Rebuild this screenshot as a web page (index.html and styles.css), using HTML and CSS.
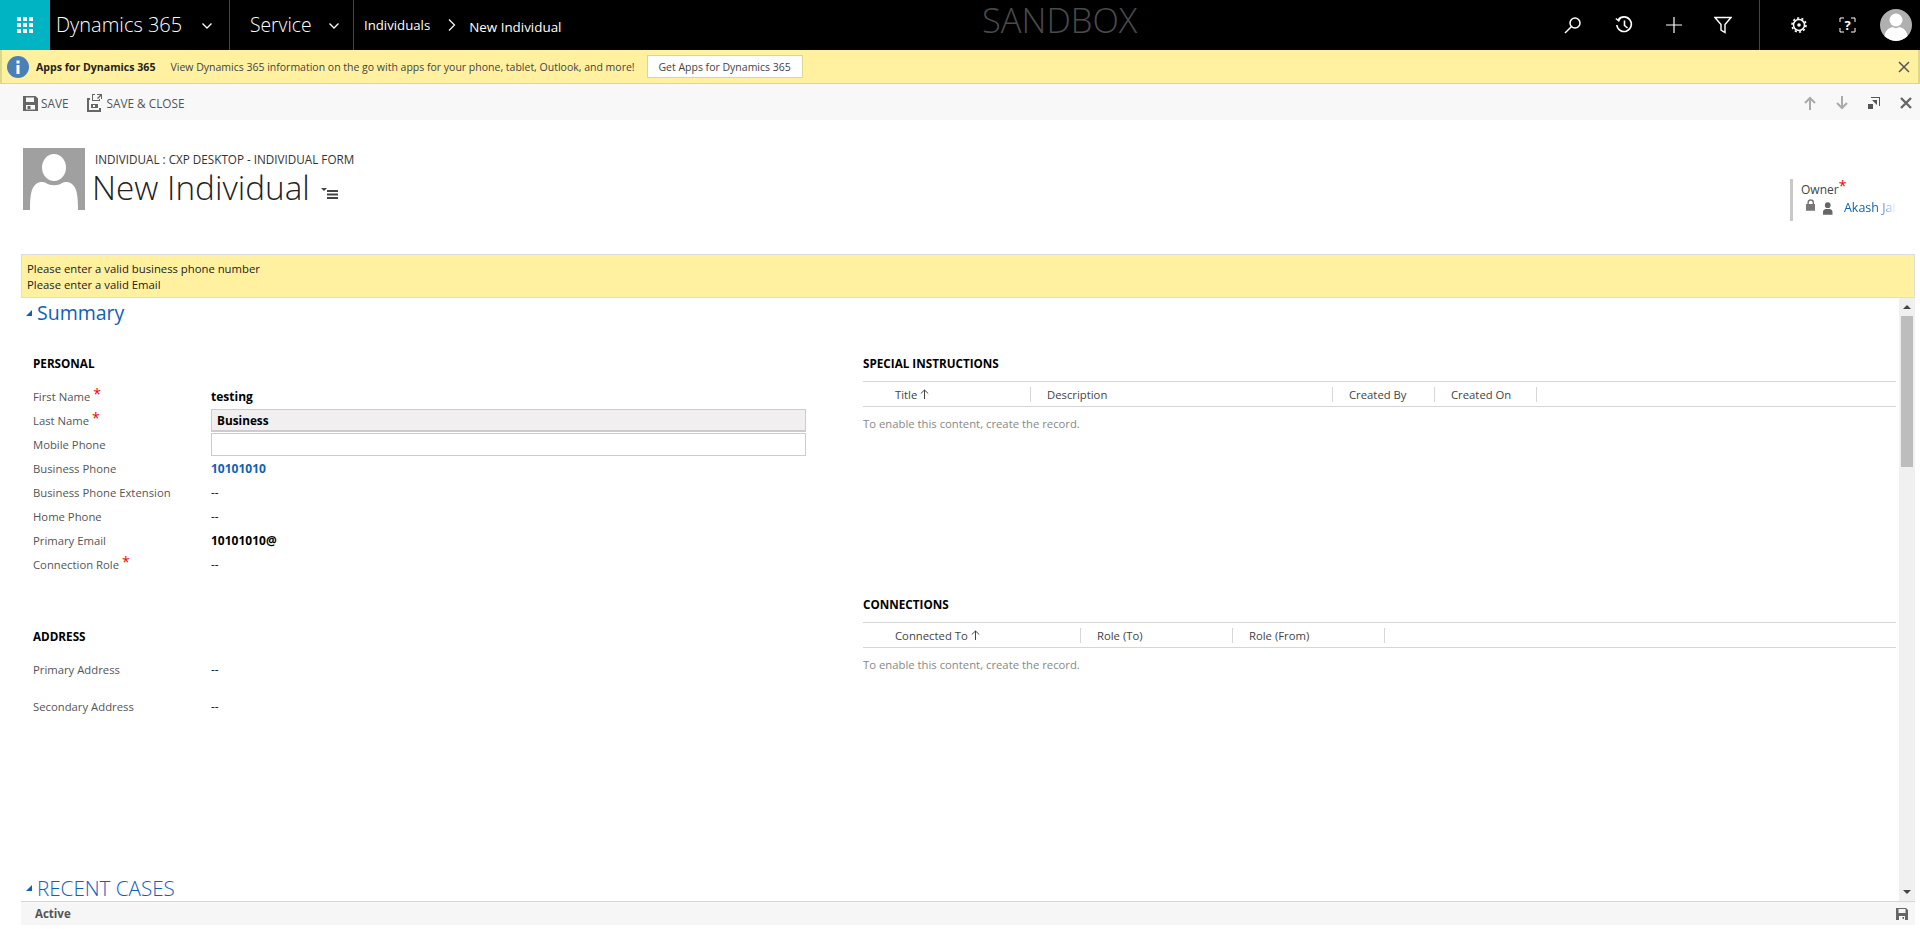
FILE: index.html
```html
<!doctype html>
<html lang=en>
<head>
	<title>New Individual</title>
	<link rel="stylesheet" href="styles.css">
</head>

<body>
	<header id=nav>
		<div class=tile>
			<svg width=16 height=16 viewBox="0 0 16 16" fill=#fff>
				<path d="M0 0h4v4H0zM6 0h4v4H6zM12 0h4v4h-4zM0 6h4v4H0zM6 6h4v4H6zM12 6h4v4h-4zM0 12h4v4H0zM6 12h4v4H6zM12 12h4v4h-4z"/>
			</svg>
		</div>
		<div class="area product">
			<span>Dynamics 365</span>
			<svg class=chev width=10 height=6 viewBox="0 0 10 6"><path d="M.5.5 5 5 9.500.5" fill=none stroke=#fff stroke-width=1.300 /></svg>
		</div>
		<div class="area service">
			<span>Service</span>
			<svg class=chev width=10 height=6 viewBox="0 0 10 6"><path d="M.5.5 5 5 9.500.5" fill=none stroke=#fff stroke-width=1.300 /></svg>
		</div>
		<div class=crumbs>
			<span class=crumb>Individuals</span>
			<svg width=8 height=12 viewBox="0 0 8 12"><path d="M1 .5 6.500 6 1 11.500" fill=none stroke=#fff stroke-width=1.200 /></svg>
			<span class="crumb current">New Individual</span>
		</div>
		<div class=sandbox>SANDBOX</div>
		<div class=tools>
			<svg width=18 height=18 viewBox="0 0 18 18" fill=none stroke=#fff stroke-width=1.500><circle cx=11 cy=7 r=5 /><path d="M7.300 10.700 1 17"/></svg>
			<svg width=18 height=18 viewBox="0 0 18 18" fill=none stroke=#fff stroke-width=1.600><path d="M3.200 3.800A7.300 7.300 0 1 1 1.800 9"/><path d="M.8 2.500 3.800 5 5.500 1.800" stroke-width=1.300 /><path d="M9.500 4.500V9.500L12.500 12"/></svg>
			<svg width=16 height=16 viewBox="0 0 16 16" stroke=#fff stroke-width=1.200><path d="M8 0v16M0 8h16"/></svg>
			<svg width=18 height=18 viewBox="0 0 18 18" fill=none stroke=#fff stroke-width=1.400><path d="M1 1.500h16L11 8.500v8L7 14V8.500z"/></svg>
			<div class=tools-sep></div>
			<svg class=gear width=16 height=16 viewBox="0 0 16 16" fill=none stroke=#fff><circle cx=8 cy=8 r=5.500 stroke-width=1.500 /><circle cx=8 cy=8 r=7 stroke-width=1.600 stroke-dasharray="2.200 2.200" /><circle cx=8 cy=8 r=1.800 fill=#fff stroke=none /></svg>
			<div class=help>
				<svg width=17 height=16 viewBox="0 0 17 16" fill=none stroke=#fff><path d="M1 5V1h4M12 1h4v4M16 11v4h-4M5 15H1v-4"/></svg>
				<span>?</span>
			</div>
			<svg class=avatar width=32 height=32 viewBox="0 0 32 32">
				<circle cx=16 cy=16 r=16 fill=#b0b0b0 />
				<circle cx=16 cy=11 r=6.500 fill=#fff />
				<path d="M4.500 27c1-7 6-8.500 8-9 2 1.500 5 1.500 7 0 2 .5 7 2 8 9a16 16 0 0 1-23 0z" fill=#fff />
			</svg>
		</div>
	</header>

	<div id=notify>
		<svg width=22 height=22 viewBox="0 0 22 22"><circle cx=11 cy=11 r=11 fill=#4a80b8 /><rect x=9.500 y=9 width=3 height=9 fill=#fff /><rect x=9.500 y=4.500 width=3 height=3 fill=#fff /></svg>
		<b>Apps for Dynamics 365</b>
		<span>View Dynamics 365 information on the go with apps for your phone, tablet, Outlook, and more!</span>
		<button>Get Apps for Dynamics 365</button>
		<svg class=notify-close width=12 height=12 viewBox="0 0 12 12"><path d="M1 1l10 10M11 1 1 11" stroke=#555 stroke-width=1.500 /></svg>
	</div>

	<div id=commands>
		<div class=command>
			<svg width=15 height=16 viewBox="0 0 15 16" fill=#666><path fill-rule=evenodd d="M0 1h12.500L15 3.500V16H0zM3 2.500V7h8V2.500zM3 10v4.500h9V10zM4.500 11h3v3h-3z"/></svg>
			SAVE
		</div>
		<div class=command>
			<svg width=17 height=19 viewBox="0 0 17 19" fill=#666><path fill-rule=evenodd d="M0 5h3v2H2v10h10v-2h2v4H0zM4 11h7v4H4zM6 12v2h2v-2z"/><path d="M5 1h3v1H6v5h6V6h1v2H5zM10 1h5v5h-1V3L11 6 10 5l3-3h-3z"/></svg>
			SAVE &amp; CLOSE
		</div>
		<div class=nav-icons>
			<svg width=12 height=14 viewBox="0 0 12 14" fill=none stroke=#aaa stroke-width=2><path d="M6 14V2M1 7l5-5 5 5"/></svg>
			<svg width=12 height=14 viewBox="0 0 12 14" fill=none stroke=#aaa stroke-width=2><path d="M6 0v12M1 7l5 5 5-5"/></svg>
			<svg width=12 height=12 viewBox="0 0 12 12"><path d="M3 0h9v9h-1V1H3z" fill=#555 /><path d="M0 7h5v5H0zM4 3h5v5z" fill=#555 /></svg>
			<svg width=12 height=12 viewBox="0 0 12 12"><path d="M1 1l10 10M11 1 1 11" stroke=#666 stroke-width=2.400 /></svg>
		</div>
	</div>

	<div id=form-head>
		<svg class=photo width=62 height=62 viewBox="0 0 62 62">
			<rect width=62 height=62 fill=#a0a0a0 />
			<ellipse cx=31 cy=19.500 rx=12 ry=13.500 fill=#fff />
			<path d="M7 62c0-14 1-22 6-26 4-3 8-2 10-1 4 3 12 3 16 0 2-1 6-2 10 1 5 4 6 12 6 26z" fill=#fff />
		</svg>
		<div class=titles>
			<div class=form-name>INDIVIDUAL : CXP DESKTOP - INDIVIDUAL FORM</div>
			<div class=record>
				<h1>New Individual</h1>
				<svg width=17 height=11 viewBox="0 0 17 11" fill=#444><path d="M0 0h6L3 3zM6 2h11v2H6zM6 5.500h11v2H6zM6 9h11v2H6z"/></svg>
			</div>
		</div>
		<div class=owner>
			<div class=owner-label>Owner<i class=req>*</i></div>
			<div class=owner-value>
				<svg width=10 height=12 viewBox="0 0 10 12" fill=#777><path fill-rule=evenodd d="M0 5h1.500V3.500a3.500 3.500 0 0 1 7 0V5H10v7H0zM3 5h4V3.500a2 2 0 0 0-4 0z"/></svg>
				<svg class=owner-user width=10 height=13 viewBox="0 0 10 13" fill=#666><circle cx=5 cy=3 r=3 /><path d="M0 13v-3c0-2 2-3 3-3h4c1 0 3 1 3 3v3z"/></svg>
				<span>Akash Jain</span>
			</div>
		</div>
	</div>

	<div id=warnings>
		<div>Please enter a valid business phone number</div>
		<div>Please enter a valid Email</div>
	</div>

	<main id=content>
		<div class=scroller>
			<h2 class=section><i class=tri></i>Summary</h2>
			<div class=columns>
				<section class=left>
					<h3>PERSONAL</h3>
					<div class=fields>
						<label>First Name<i class=req>*</i></label><b>testing</b>
						<label>Last Name<i class=req>*</i></label><input class=filled value=Business>
						<label>Mobile Phone</label><input>
						<label>Business Phone</label><b class=link>10101010</b>
						<label>Business Phone Extension</label><span>--</span>
						<label>Home Phone</label><span>--</span>
						<label>Primary Email</label><b>10101010@</b>
						<label>Connection Role<i class=req>*</i></label><span>--</span>
					</div>
					<h3 class=address>ADDRESS</h3>
					<div class="fields tall">
						<label>Primary Address</label><span>--</span>
						<label>Secondary Address</label><span>--</span>
					</div>
				</section>
				<section class=right>
					<h3>SPECIAL INSTRUCTIONS</h3>
					<div class="grid-head special">
						<div>Title <svg width=9 height=10 viewBox="0 0 9 10" fill=none stroke=#444><path d="M4.500 10V1M.8 4.500 4.500 1l3.700 3.500"/></svg></div>
						<div>Description</div>
						<div>Created By</div>
						<div>Created On</div>
					</div>
					<p class=empty>To enable this content, create the record.</p>
					<h3 class=connections>CONNECTIONS</h3>
					<div class="grid-head conn">
						<div>Connected To <svg width=9 height=10 viewBox="0 0 9 10" fill=none stroke=#444><path d="M4.500 10V1M.8 4.500 4.500 1l3.700 3.500"/></svg></div>
						<div>Role (To)</div>
						<div>Role (From)</div>
					</div>
					<p class=empty>To enable this content, create the record.</p>
				</section>
			</div>
			<h2 class="section recent"><i class=tri></i>RECENT CASES</h2>
		</div>
		<div class=scrollbar>
			<i class=arrow-up></i>
			<div class=thumb-track><div class=thumb></div></div>
			<i class=arrow-down></i>
		</div>
	</main>

	<footer id=status>
		<b>Active</b>
		<svg width=12 height=12 viewBox="0 0 12 12" fill=#666><path fill-rule=evenodd d="M0 0h10l2 2v10H0zM2.500 1v4h7V1zM3 8v4h6V8zM6.500 9H8v2H6.500z"/></svg>
	</footer>
</body>
</html>
```

FILE: styles.css
```css
html, body {
	width: 100%;
	height: 100%;
	margin: 0;
}

body {
	display: flex;
	flex-direction: column;
	overflow: hidden;
	background: #fff;
	color: #444;
	font: 11.3px "Open Sans", sans-serif;
}

b {color: #000}
i {font-style: normal}

.req {
	color: #e00;
	font-size: 14px;
	line-height: 0;
	margin-left: 3px;
	vertical-align: 2px;
}

/* top bar */
#nav {
	display: flex;
	align-items: stretch;
	flex: 0 0 50px;
	background: #000;
	color: #fff;
}

.tile {
	display: flex;
	align-items: center;
	justify-content: center;
	width: 50px;
	background: #00b4c4;
}

.area {
	display: flex;
	align-items: center;
	border-right: 1px solid #444;
	font-size: 20px;
	font-weight: 300;
	padding-bottom: 2px;
	box-sizing: border-box;
}

.area .chev {margin-top: 4px}
.product {width: 180px; padding-left: 6px; gap: 20px}
.service {width: 124px; padding-left: 20px; gap: 17px; font-size: 19.3px}

.crumbs {
	display: flex;
	align-items: center;
	gap: 18px;
	padding-left: 10px;
	width: 260px;
}

.crumb {font-size: 13.2px; margin-bottom: 1px}
.crumb.current {margin: 3px 0 0 -5px; font-size: 13.4px}

.sandbox {
	margin: 0 0 0 358px;
	font-size: 34.5px;
	font-weight: 300;
	color: #4a4a4a;
	line-height: 40px;
}

.tools {
	display: flex;
	align-items: center;
	margin-left: auto;
	height: 100%;
}

.tools svg {flex-shrink: 0}
.tools > svg:nth-child(1) {margin-right: 33px}
.tools > svg:nth-child(2) {margin-right: 33px}
.tools > svg:nth-child(3) {margin-right: 32px}
.tools-sep {width: 1px; height: 100%; background: #444; margin: 0 31px 0 27px}
.tools .gear {margin-right: 32px}
.tools .avatar {margin: 0 8px 0 24px}

.help {
	display: flex;
	align-items: center;
	justify-content: center;
	position: relative;
	width: 17px;
	height: 16px;
}

.help span {
	position: absolute;
	font-size: 13px;
	font-weight: 700;
}

/* app banner */
#notify {
	display: flex;
	align-items: center;
	flex: 0 0 34px;
	box-sizing: border-box;
	padding: 0 8px 0 5px;
	background: #fff19f;
	border: solid #dcd88a;
	border-width: 0 2px 1px;
	color: #444;
	font-size: 10.5px;
}

#notify b {margin: 0 15px 0 7px; font-size: 10.6px; color: #222}
#notify button {
	margin-left: 12px;
	height: 23px;
	width: 156px;
	padding: 0;
	background: #fff;
	border: 1px solid #dcd88a;
	color: #444;
	font: inherit;
}
.notify-close {margin-left: auto}

/* command bar */
#commands {
	display: flex;
	align-items: center;
	flex: 0 0 36px;
	box-sizing: border-box;
	padding: 1px 0 0 23px;
	background: #f8f8f8;
	color: #555;
	font-size: 11.8px;
}

.command {
	display: flex;
	align-items: center;
	gap: 3px;
	margin-right: 18px;
}

.nav-icons {
	display: flex;
	align-items: center;
	gap: 20px;
	margin-left: auto;
	padding-right: 8px;
}

/* form header */
#form-head {
	display: flex;
	flex: 0 0 134px;
	box-sizing: border-box;
	padding: 28px 23px 0 23px;
}

.titles {margin-left: 7px}
.form-name {margin: 3px 0 0 3px; color: #333; font-size: 11.7px; line-height: 16px}
.record {display: flex; align-items: flex-end; gap: 11px}
.record svg {margin-bottom: 8px}

h1 {
	margin: 0;
	font-size: 33.3px;
	font-weight: 300;
	line-height: 40px;
	color: #222;
}

.owner {
	margin: 31px 0 0 auto;
	height: 42px;
	width: 107px;
	box-sizing: border-box;
	border-left: 3px solid #c8c8c8;
	padding-left: 8px;
	font-size: 12px;
}

.owner-label {line-height: 19px; margin-top: 1px}
.owner-label .req {margin-left: 0; vertical-align: 3px}

.owner-value {
	display: flex;
	align-items: flex-start;
	margin-left: 5px;
}

.owner-user {margin: 3px 0 0 8px}

.owner-value span {
	margin-left: 11px;
	white-space: nowrap;
	color: #1160b7;
	font-size: 12.5px;
	-webkit-mask-image: linear-gradient(to right, #000 62%, transparent 100%);
	mask-image: linear-gradient(to right, #000 62%, transparent 100%);
	width: 56px;
	overflow: hidden;
	line-height: 18px;
}

/* warnings */
#warnings {
	flex: 0 0 44px;
	box-sizing: border-box;
	margin: 0 5px 0 21px;
	padding: 6px 5px 0;
	background: #fff19f;
	border: 1px solid #ddd;
	color: #222;
	font-size: 11.3px;
	line-height: 16px;
}

/* scrolling part */
#content {
	display: flex;
	flex: 1;
	min-height: 0;
	margin: 0 5px 0 21px;
}

.scroller {
	flex: 1;
	min-width: 0;
	display: flex;
	flex-direction: column;
}

.section {
	margin: 0;
	padding-left: 5px;
	color: #1160b7;
	font-size: 19.5px;
	font-weight: 400;
	line-height: 30px;
	display: flex;
	align-items: center;
	gap: 5px;
}

.tri {
	width: 0;
	height: 0;
	border: solid transparent;
	border-width: 0 0 6px 6px;
	border-bottom-color: #1160b7;
}

.recent {margin-top: auto; font-weight: 300; font-size: 20.6px; line-height: 26px}

.columns {
	display: grid;
	grid-template-columns: 830px 1fr;
	flex: 1;
	padding: 27px 0 0 12px;
}

h3 {
	margin: 0;
	color: #000;
	font-size: 11.7px;
	font-weight: 700;
	line-height: 16px;
}

.fields {
	display: grid;
	grid-template-columns: 178px 595px;
	grid-auto-rows: 24px;
	margin-top: 13px;
	align-items: center;
}

.fields label {color: #555}
.fields b {font-size: 12px}
.fields span {color: #222; font-size: 12px}

.fields .link {color: #1160b7}

.fields input {
	box-sizing: border-box;
	width: 100%;
	height: 23px;
	margin: 0;
	padding: 0 5px;
	background: #fff;
	border: 1px solid #ccc;
	font: 700 11.8px "Open Sans", sans-serif;
	color: #000;
}

.fields .filled {background: #f1eff0; border-bottom-width: 2px}

.address {margin-top: 52px}

.tall {
	grid-auto-rows: 37px;
	margin-top: 7px;
}

.grid-head {
	display: grid;
	height: 26px;
	box-sizing: border-box;
	margin: 10px 0 0;
	border: solid #d6d6d6;
	border-width: 1px 0;
	color: #444;
	align-items: center;
}

.grid-head div {
	height: 15px;
	line-height: 15px;
	padding-left: 16px;
	border-right: 1px solid #d6d6d6;
	white-space: nowrap;
}

.grid-head div:first-child {padding-left: 32px}
.special {grid-template-columns: 168px 302px 102px 102px 1fr}
.conn {grid-template-columns: 218px 152px 152px 1fr}

.empty {
	margin: 9px 0 0;
	color: #888;
	line-height: 16px;
}

.connections {margin-top: 164px}

.scrollbar {
	display: flex;
	flex-direction: column;
	align-items: center;
	flex: 0 0 16px;
	margin-left: 3px;
	background: #f0f0f0;
}

.arrow-up, .arrow-down {
	width: 0;
	height: 0;
	border: 4px solid transparent;
	flex-shrink: 0;
}

.arrow-up {border-bottom: 4px solid #444; border-top-width: 0; margin: 7px 0 7px}
.arrow-down {border-top: 4px solid #444; border-bottom-width: 0; margin: 0 0 7px}

.thumb-track {flex: 1; width: 12px}
.thumb {height: 151px; background: #bdbdbd}

/* status bar */
#status {
	display: flex;
	align-items: center;
	justify-content: space-between;
	flex: 0 0 24px;
	box-sizing: border-box;
	margin: 0 5px 4px 21px;
	padding: 0 7px 0 14px;
	background: #f6f6f6;
	border-top: 1px solid #d6d6d6;
}

#status b {color: #555; font-size: 11.5px}
```
